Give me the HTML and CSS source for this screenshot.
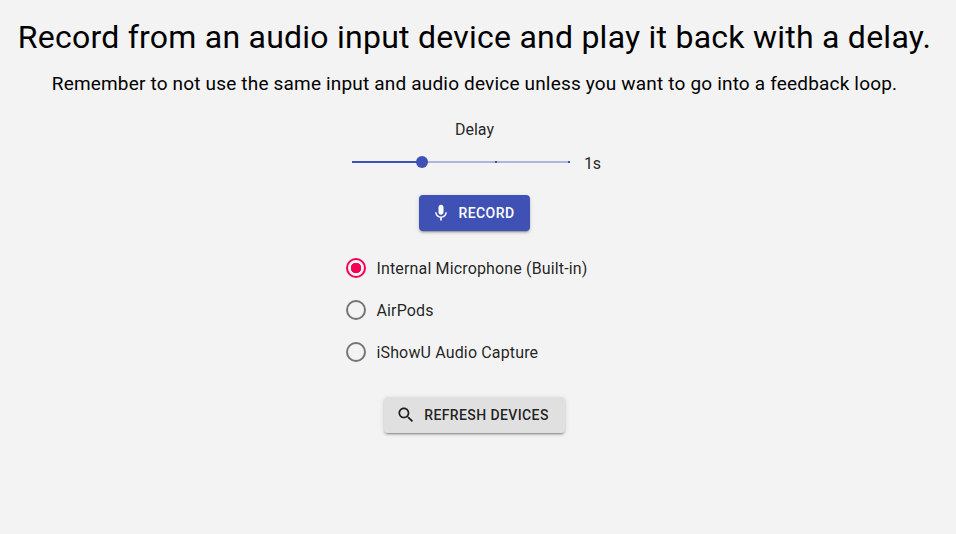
FILE: index.html
```html
<!DOCTYPE html>
<html lang="en">
<head>
  <meta charset="UTF-8">
  <title>Audio delay</title>
  <link rel="stylesheet" href="styles.css">
</head>
<body>
  <main class="app">
    <h1>Record from an audio input device and play it back with a delay.</h1>
    <p class="note">Remember to not use the same input and audio device unless you want to go into a feedback loop.</p>

    <div class="delay">
      <div class="delay-label">Delay</div>
      <div class="delay-row">
        <div class="slider">
          <div class="track"></div>
          <div class="track-fill"></div>
          <span class="mark mark-start"></span>
          <span class="mark mark-mid"></span>
          <span class="mark mark-end"></span>
          <span class="thumb"></span>
        </div>
        <span class="delay-value">1s</span>
      </div>
    </div>

    <button class="btn btn-primary" type="button">
      <svg class="icon" viewBox="0 0 24 24"><path d="M12 14c1.66 0 2.99-1.34 2.99-3L15 5c0-1.66-1.34-3-3-3S9 3.34 9 5v6c0 1.66 1.34 3 3 3zm5.3-3c0 3-2.54 5.1-5.3 5.1S6.7 14 6.7 11H5c0 3.41 2.72 6.23 6 6.72V21h2v-3.28c3.28-.48 6-3.3 6-6.72h-1.7z"/></svg>
      Record
    </button>

    <div class="devices">
      <label class="device"><span class="radio radio-on"></span>Internal Microphone (Built-in)</label>
      <label class="device"><span class="radio"></span>AirPods</label>
      <label class="device"><span class="radio"></span>iShowU Audio Capture</label>
    </div>

    <button class="btn btn-default" type="button">
      <svg class="icon" viewBox="0 0 24 24"><path d="M15.5 14h-.79l-.28-.27C15.41 12.59 16 11.11 16 9.5 16 5.91 13.09 3 9.5 3S3 5.91 3 9.5 5.91 16 9.5 16c1.61 0 3.09-.59 4.23-1.57l.27.28v.79l5 4.99L20.49 19l-4.99-5zm-6 0C7.01 14 5 11.99 5 9.5S7.01 5 9.5 5 14 7.01 14 9.5 11.99 14 9.5 14z"/></svg>
      Refresh devices
    </button>
  </main>
</body>
</html>
```

FILE: styles.css
```css
html, body { margin: 0; height: 100%; }
body { background: #f3f3f3; color: #000; font-family: Roboto, "Liberation Sans", sans-serif; overflow: hidden; }

.app { display: flex; flex-direction: column; align-items: center; width: 949px; padding-top: 15px; }

h1 { margin: 0; font-size: 32px; font-weight: 400; line-height: 44px; letter-spacing: 0.24px; white-space: nowrap; }
.note { margin: 13px 0 0; font-size: 19px; line-height: 24px; letter-spacing: 0.18px; white-space: nowrap; }

.delay { margin-top: 24px; display: flex; flex-direction: column; align-items: center; }
.delay-label { font-size: 16px; line-height: 20px; color: rgba(0,0,0,0.87); }
.delay-row { margin-top: 9px; height: 26px; display: flex; align-items: flex-start; gap: 14px; margin-left: 4px; }
.delay-value { font-size: 16px; line-height: 24px; color: rgba(0,0,0,0.87); margin-top: 3px; }

.slider { position: relative; width: 218px; height: 24px; margin-top: 1px; }
.track { position: absolute; left: 0; right: 0; top: 11px; height: 2px; background: #3f51b5; opacity: 0.38; }
.track-fill { position: absolute; left: 0; width: 70px; top: 11px; height: 2px; background: #3f51b5; }
.mark { position: absolute; top: 11px; width: 2px; height: 2px; background: #3f51b5; }
.mark-start { left: 0; opacity: 0.5; }
.mark-mid { left: 143px; }
.mark-end { right: 0; }
.thumb { position: absolute; left: 64px; top: 6px; width: 12px; height: 12px; border-radius: 50%; background: #3f51b5; }

.btn { display: inline-flex; align-items: center; justify-content: center; height: 36px; border: 0; border-radius: 4px; padding: 0 16px 0 12px; font-family: inherit; font-size: 14px; font-weight: 500; letter-spacing: 0.4px; text-transform: uppercase; box-shadow: 0 3px 1px -2px rgba(0,0,0,.2), 0 2px 2px 0 rgba(0,0,0,.14), 0 1px 5px 0 rgba(0,0,0,.12); }
.icon { width: 20px; height: 20px; fill: currentColor; margin-right: 8px; }
.btn-primary { margin-top: 20px; background: #3f51b5; color: #fff; }
.btn-default { margin-top: 24px; background: #e0e0e0; color: rgba(0,0,0,0.87); }

.devices { margin: 16px 16px 0 0; display: flex; flex-direction: column; }
.device { display: flex; align-items: center; height: 42px; font-size: 16px; color: rgba(0,0,0,0.87); letter-spacing: 0.15px; }
.radio { width: 20px; height: 20px; box-sizing: border-box; border: 2px solid #757575; border-radius: 50%; margin: 0 10px 0 1px; flex: none; }
.radio-on { border-color: #f50057; background: radial-gradient(circle, #f50057 0 5px, transparent 5.5px); }
```
